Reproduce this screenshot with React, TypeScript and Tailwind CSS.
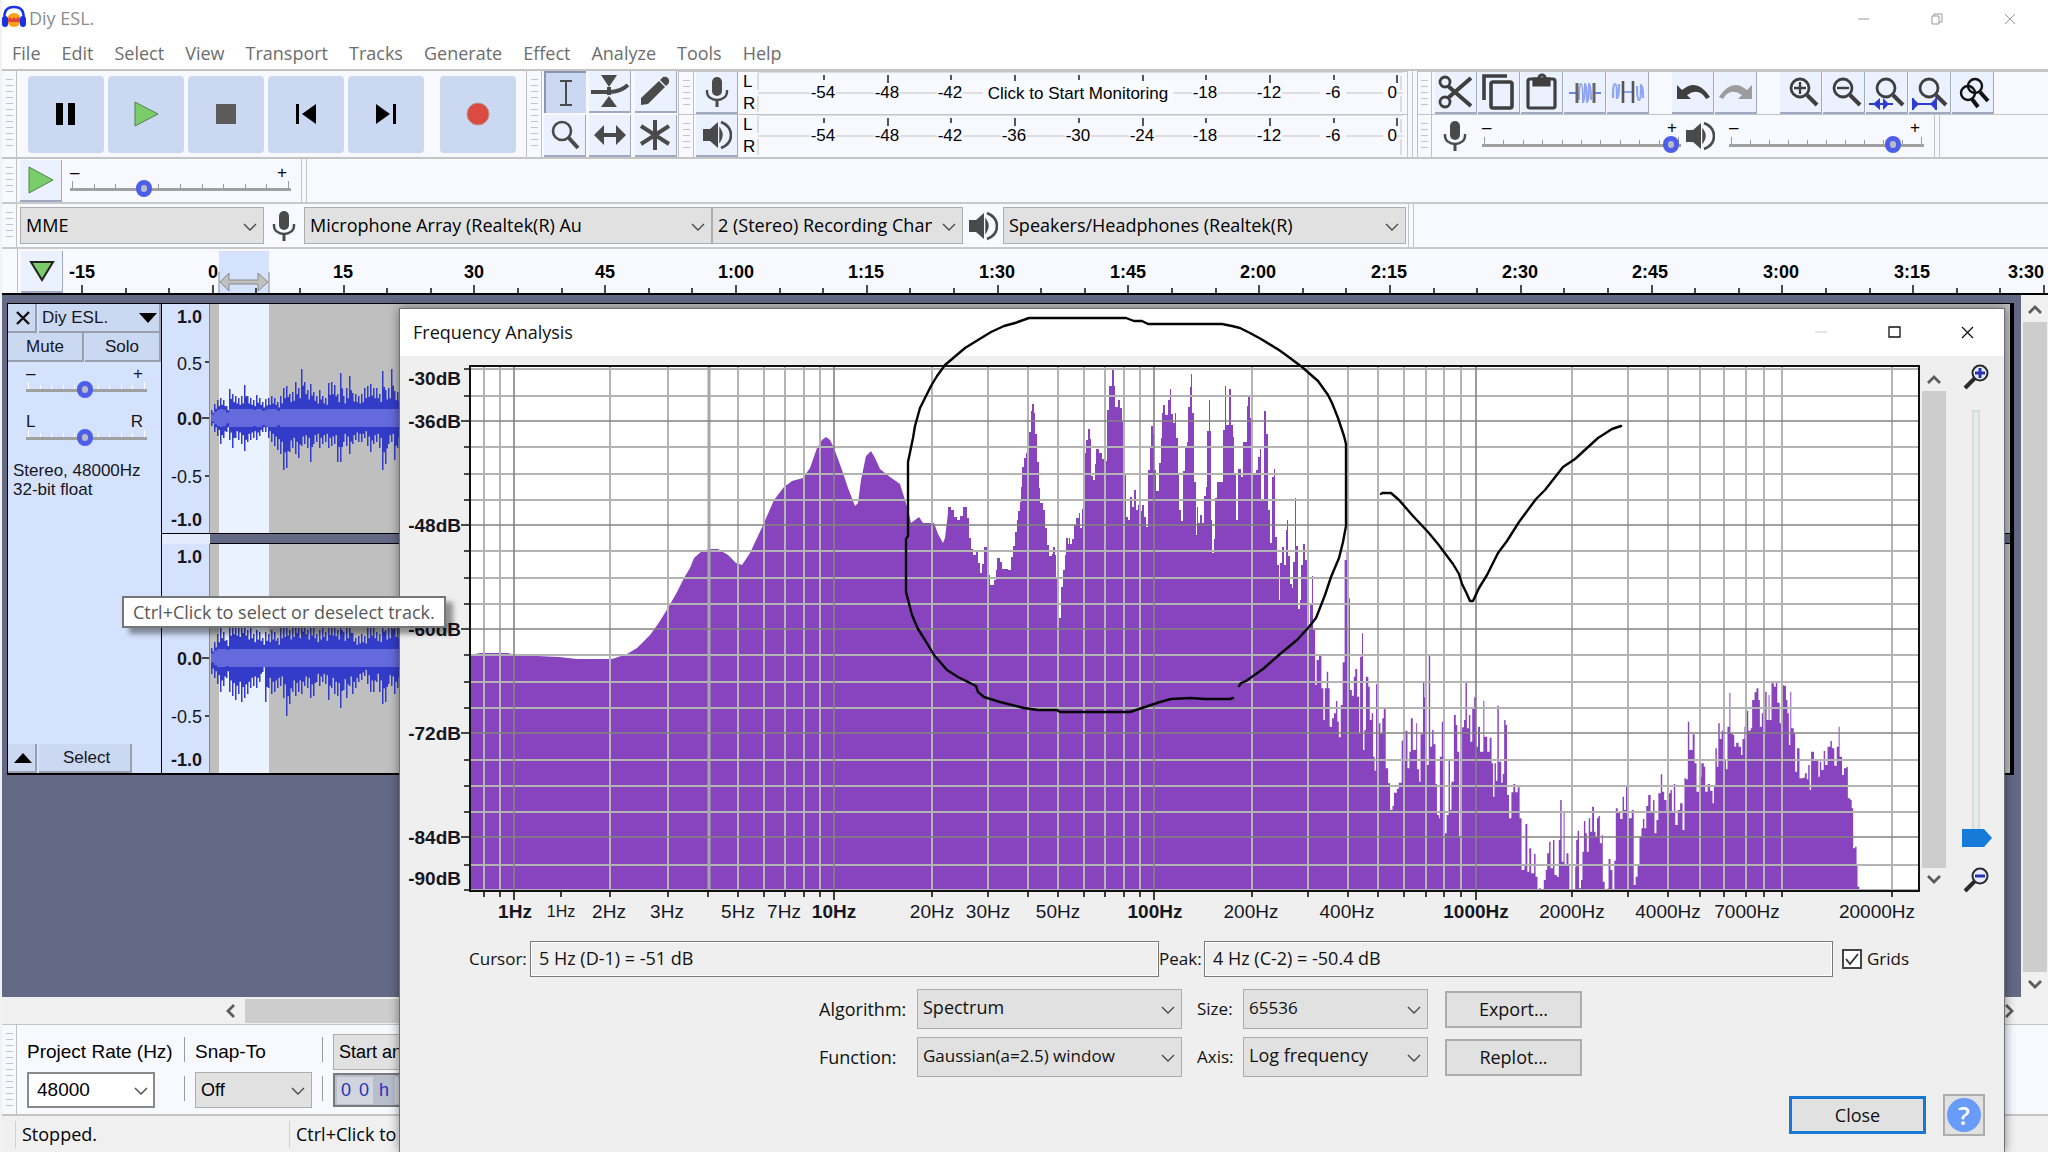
import type { ReactElement, ReactNode } from 'react';

const SANS = "font-['Open_Sans','Noto_Sans',sans-serif]";
const ARIAL = "font-['Liberation_Sans',Arial,sans-serif]";

const menu = ['File', 'Edit', 'Select', 'View', 'Transport', 'Tracks', 'Generate', 'Effect', 'Analyze', 'Tools', 'Help'];

const timeLabels = ['-15', '0', '15', '30', '45', '1:00', '1:15', '1:30', '1:45', '2:00', '2:15', '2:30', '2:45', '3:00', '3:15'];

const meterLabels = ['-54', '-48', '-42', '-36', '-30', '-24', '-18', '-12', '-6', '0'];

/* ---------- spectrum data ---------- */

const lowBand =
  '470,655 480,653 508,653 515,655 559,657 577,659 612,659 627,654 637,648 650,635 658,624 668,608 677,592 684,578 690,568 694,558 702,551 710,549 718,549 728,555 736,563 742,565 750,553 757,538 764,523 774,500 784,487 792,481 803,478 810,468 817,448 822,440 826,437 830,440 834,448 842,470 848,488 855,506 858,503 861,480 866,456 871,451 875,458 880,469 890,477 900,484 905,500 908,510 911,523 919,517 923,523 934,523 938,534 943,543 945,538 948,513';

const midBand: number[][] = [
  [948, 507], [951, 510], [954, 517], [957, 520], [960, 516], [963, 507], [967, 518], [969, 538], [971, 549], [973, 555], [976, 552], [978, 563], [980, 573],
  [982, 564], [984, 547], [987, 575], [990, 585], [994, 580], [996, 570], [997, 558], [1000, 562], [1002, 569], [1008, 570], [1011, 557], [1013, 546], [1015, 532],
  [1017, 520], [1018, 511], [1020, 502], [1021, 487], [1022, 467], [1024, 458], [1026, 453], [1028, 432], [1031, 411], [1032, 404], [1034, 413], [1035, 434],
  [1037, 462], [1039, 488], [1040, 503], [1043, 510], [1045, 528], [1047, 545], [1049, 556], [1052, 554], [1053, 547], [1055, 555], [1056, 578], [1059, 618],
  [1061, 587], [1063, 570], [1065, 555], [1066, 538], [1068, 544], [1069, 538], [1070, 544], [1072, 539], [1074, 525], [1076, 518], [1079, 513], [1080, 528],
  [1082, 509], [1084, 453], [1086, 440], [1088, 429], [1090, 439], [1091, 476], [1093, 480], [1095, 464], [1096, 449], [1099, 453], [1102, 459], [1105, 461],
  [1107, 410], [1109, 386], [1112, 369], [1114, 386], [1115, 407], [1118, 400], [1120, 408], [1122, 422], [1124, 475], [1126, 517], [1128, 520], [1130, 497],
  [1132, 507], [1134, 490], [1136, 510], [1138, 505], [1141, 511], [1142, 505], [1144, 517], [1146, 527], [1148, 470], [1150, 448], [1151, 426], [1153, 434],
  [1154, 470], [1156, 491], [1159, 463], [1161, 438], [1162, 413], [1163, 405], [1165, 415], [1168, 400], [1170, 389], [1171, 414], [1173, 423], [1175, 413],
  [1176, 438], [1178, 475], [1179, 510], [1181, 521], [1183, 471], [1185, 447], [1187, 442], [1188, 407], [1190, 387], [1191, 374], [1192, 413], [1194, 482],
  [1196, 535], [1197, 507], [1198, 523], [1200, 515], [1202, 523], [1204, 496], [1206, 487], [1207, 431], [1209, 400], [1210, 431], [1211, 520], [1212, 553],
  [1214, 539], [1215, 498], [1217, 482], [1221, 482], [1223, 430], [1225, 386], [1226, 425], [1229, 389], [1231, 425], [1233, 437], [1234, 475], [1236, 520],
  [1238, 469], [1241, 477], [1243, 442], [1247, 406], [1248, 397], [1250, 418], [1252, 474], [1256, 470], [1258, 457], [1260, 449], [1261, 499], [1264, 411],
  [1266, 434], [1268, 510], [1270, 543], [1272, 477], [1274, 469], [1275, 537], [1277, 565], [1279, 600], [1280, 563], [1282, 547], [1284, 565], [1286, 530],
  [1287, 520], [1288, 556], [1290, 584], [1292, 588], [1293, 562], [1295, 498], [1296, 546], [1298, 609], [1300, 600], [1301, 565], [1303, 544], [1305, 560],
  [1307, 570], [1308, 629], [1310, 604], [1312, 576],
];

// x is in 1/2.0686 px from 1290, y in 1/3 px from 500
const highBand: number[][] = [
  [47, 390], [52, 555], [55, 480], [60, 468], [65, 565], [69, 660], [72, 565], [76, 515], [79, 565], [82, 680], [87, 655], [91, 640], [95, 603], [98, 665],
  [101, 712], [105, 615], [109, 487], [113, 180], [117, 155], [119, 295], [124, 570], [128, 587], [132, 530], [135, 507], [139, 590], [143, 700], [145, 470],
  [149, 400], [151, 750], [154, 690], [157, 530], [162, 560], [165, 660], [169, 640], [172, 770], [175, 812], [178, 553], [182, 670], [187, 700], [191, 655],
  [194, 625], [198, 805], [203, 850], [207, 930], [212, 918], [215, 878], [221, 866], [225, 848], [231, 722], [235, 780], [239, 692], [243, 805], [247, 755],
  [250, 655], [254, 750], [261, 670], [263, 808], [267, 845], [270, 703], [275, 548], [278, 592], [282, 795], [287, 468], [290, 740], [294, 690], [297, 733],
  [301, 852], [304, 945], [308, 955], [310, 770], [314, 665], [317, 860], [320, 1000], [324, 945], [328, 783], [331, 930], [334, 845], [339, 645], [343, 675],
  [346, 755], [350, 1010], [354, 858], [356, 682], [360, 660], [363, 548], [366, 685], [370, 645], [373, 725], [377, 625], [381, 592], [385, 740], [389, 680],
  [393, 755], [400, 602], [402, 710], [408, 755], [413, 713], [417, 790], [420, 890], [423, 790], [426, 843], [429, 617], [432, 785], [437, 848], [440, 822],
  [443, 660], [446, 675], [449, 885], [453, 955], [458, 877], [462, 852], [466, 877], [471, 862], [475, 955], [479, 1110], [485, 1098], [487, 972], [491, 1115],
  [495, 1045], [499, 1120], [505, 1062], [508, 1130], [512, 1170], [515, 1165], [519, 1170], [525, 1140], [529, 1110], [532, 1060], [536, 1025], [539, 1105],
  [544, 1020], [547, 1125], [552, 1130], [556, 1020], [559, 900], [562, 1085], [566, 937], [568, 1092], [572, 1060], [576, 1092], [578, 1170], [588, 1170],
  [590, 1100], [592, 1020], [595, 992], [598, 1165], [602, 1140], [605, 1055], [608, 963], [611, 1000], [614, 1055], [618, 955], [621, 995], [625, 920],
  [629, 995], [632, 1010], [635, 955], [638, 948], [641, 1030], [645, 1005], [647, 1145], [651, 1170], [657, 1165], [659, 1077], [663, 1110], [667, 1170],
  [671, 1082], [674, 925], [678, 935], [683, 957], [688, 890], [691, 930], [695, 860], [698, 935], [701, 955], [707, 930], [711, 1155], [715, 1130], [719, 1095],
  [723, 1010], [727, 985], [730, 957], [733, 985], [737, 918], [741, 885], [746, 935], [751, 900], [754, 1000], [758, 960], [762, 880], [767, 823], [770, 875],
  [774, 900], [779, 935], [783, 880], [787, 870], [790, 935], [794, 852], [797, 975], [802, 930], [807, 910], [812, 990], [816, 835], [819, 838], [823, 665],
  [826, 750], [833, 703], [837, 790], [841, 875], [846, 830], [851, 790], [856, 800], [859, 875], [864, 852], [869, 872], [874, 910], [877, 860], [880, 745],
  [883, 800], [886, 670], [889, 717], [893, 692], [897, 780], [902, 808], [905, 680], [909, 578], [911, 700], [916, 705], [919, 740], [923, 728], [928, 740],
  [933, 765], [936, 717], [940, 680], [945, 632], [948, 692], [953, 685], [956, 600], [961, 577], [965, 565], [969, 600], [972, 680], [976, 640], [980, 700],
  [983, 575], [986, 660], [990, 585], [992, 660], [996, 550], [1001, 560], [1005, 548], [1008, 608], [1013, 670], [1018, 556], [1023, 558], [1026, 600],
  [1029, 640], [1032, 735], [1035, 575], [1037, 685], [1042, 700], [1045, 815], [1049, 745], [1054, 835], [1061, 833], [1065, 820], [1069, 838], [1072, 795],
  [1075, 870], [1078, 755], [1084, 780], [1089, 780], [1093, 830], [1096, 785], [1099, 810], [1104, 753], [1107, 795], [1112, 740], [1118, 723], [1121, 745],
  [1126, 797], [1131, 740], [1135, 680], [1137, 770], [1142, 825], [1146, 805], [1151, 800], [1154, 895], [1159, 900], [1162, 925], [1165, 1045], [1169, 1040],
  [1172, 1095], [1174, 1160], [1178, 1170],
];

const steps = (points: number[][]) => points.map(([x, y]) => `H${x}V${y}`).join('');

const gridX = [484, 500, 610, 668, 738, 764, 785, 804, 820, 932, 988, 1028, 1058, 1084, 1105, 1124, 1140, 1252, 1308, 1348, 1378, 1404, 1426, 1444, 1461, 1572, 1628, 1668, 1700, 1724, 1746, 1764, 1782, 1892];
const decadeX = [514, 834, 1154, 1476];
const gridY = [369, 396, 447, 474, 500, 551, 578, 604, 655, 682, 708, 760, 786, 812, 865, 890];
const majorY = [421, 525, 629, 733, 837];

const dbLabels: [string, number][] = [
  ['-30dB', 378], ['-36dB', 421], ['-48dB', 525], ['-60dB', 629], ['-72dB', 733], ['-84dB', 837], ['-90dB', 878],
];

const hzLabels: [string, number, boolean][] = [
  ['1Hz', 515, true], ['2Hz', 609, false], ['3Hz', 667, false], ['5Hz', 738, false], ['7Hz', 784, false], ['10Hz', 834, true],
  ['20Hz', 932, false], ['30Hz', 988, false], ['50Hz', 1058, false], ['100Hz', 1155, true], ['200Hz', 1251, false], ['400Hz', 1347, false],
  ['1000Hz', 1476, true], ['2000Hz', 1572, false], ['4000Hz', 1668, false], ['7000Hz', 1747, false], ['20000Hz', 1877, false],
];

/* ---------- waveform data ---------- */

const leftTop = [8, 14, 18, 20, 18, 12, 29, 24, 22, 20, 22, 33, 22, 20, 18, 23, 20, 16, 19, 20, 22, 20, 16, 22, 30, 32, 24, 26, 36, 30, 49, 36, 28, 34, 26, 22, 28, 22, 20, 35, 36, 33, 24, 45, 22, 30, 42, 25, 24, 22, 24, 30, 32, 34, 30, 30, 24, 47, 28, 30, 49, 27, 26];
const leftBottom = [8, 14, 18, 26, 20, 14, 22, 30, 20, 22, 26, 33, 24, 22, 20, 22, 18, 14, 14, 20, 24, 28, 32, 36, 52, 50, 34, 30, 36, 40, 28, 26, 30, 44, 26, 24, 30, 26, 24, 30, 28, 26, 44, 44, 24, 28, 36, 26, 22, 24, 24, 20, 28, 34, 26, 24, 30, 52, 46, 26, 24, 42, 30];
const rightTop = [10, 16, 24, 30, 26, 18, 34, 36, 34, 32, 38, 34, 28, 30, 24, 28, 26, 20, 26, 24, 28, 26, 20, 30, 32, 34, 28, 32, 38, 30, 40, 36, 28, 34, 30, 24, 28, 32, 26, 35, 34, 33, 28, 42, 26, 30, 38, 25, 20, 22, 24, 22, 30, 34, 30, 26, 24, 40, 28, 30, 44, 32, 30];
const rightBottom = [16, 20, 26, 34, 28, 20, 34, 38, 42, 36, 44, 40, 36, 30, 28, 30, 24, 14, 44, 30, 36, 34, 30, 28, 40, 58, 46, 34, 38, 34, 36, 28, 30, 40, 38, 24, 28, 24, 26, 42, 30, 36, 38, 50, 32, 40, 28, 36, 30, 24, 22, 18, 26, 34, 34, 24, 34, 46, 44, 26, 28, 36, 30];

/* ---------- small parts ---------- */

function Grabber({ className = '' }: { className?: string }): ReactElement {
  return (
    <div className={`flex w-[15px] shrink-0 justify-center border-r border-[#c0c0c0] py-2 ${className}`}>
      <div className="w-[7px] bg-[repeating-linear-gradient(to_bottom,#c4c4c4_0px,#c4c4c4_1px,transparent_1px,transparent_6px)]" />
    </div>
  );
}

function DoubleLine(): ReactElement {
  return <div className="w-[6px] shrink-0 self-stretch border-x border-[#c4c4c4]" />;
}

type ToolProps = { label: string; pressed?: boolean; className?: string; children: ReactNode };

function Tool({ label, pressed = false, className = '', children }: ToolProps): ReactElement {
  return (
    <button
      type="button"
      aria-label={label}
      className={`flex h-[42px] w-[42px] shrink-0 items-center justify-center ${
        pressed ? 'border-l-2 border-t-2 border-[#8b95ad] bg-[#cbd8f1]' : 'border-b-2 border-r border-[#a0a9c2] bg-[#ebf1fe]'
      } ${className}`}
    >
      {children}
    </button>
  );
}

function Chevron(): ReactElement {
  return (
    <svg viewBox="0 0 14 8" className="pointer-events-none absolute right-[7px] top-1/2 -mt-[3px] h-[8px] w-[14px]">
      <path d="M1 1 L7 7 L13 1" fill="none" stroke="#4a4a4a" strokeWidth="1.4" />
    </svg>
  );
}

type PickProps = { id: string; label?: string; value: string; wrap: string; className?: string };

function Pick({ id, label, value, wrap, className = 'text-[18px]' }: PickProps): ReactElement {
  return (
    <div className={`relative ${wrap}`}>
      <select id={id} aria-label={label} className={`h-full w-full appearance-none border border-[#adadad] bg-[#e1e1e1] pl-[5px] pr-[30px] ${className}`}>
        <option>{value}</option>
      </select>
      <Chevron />
    </div>
  );
}

type RangeProps = { label: string; value: number; wrap: string; minus?: string; plus?: string; light?: boolean };

function Range({ label, value, wrap, minus = '–', plus = '+', light = false }: RangeProps): ReactElement {
  const ticks = Array.from({ length: 11 }, (_, i) => i);
  return (
    <div className={`flex flex-col ${wrap}`}>
      <div className={`flex h-[16px] items-center justify-between pr-[4px] text-[17px] leading-none ${ARIAL}`}>
        <span>{minus}</span>
        <span>{plus}</span>
      </div>
      <div className="relative h-[17px]">
        <div className="absolute inset-x-0 top-px flex h-[8px] items-end justify-between px-[2px]">
          {ticks.map((i) => (
            <span key={i} className={`w-px ${i % 10 === 0 ? 'h-[8px]' : 'h-[5px]'} ${light ? 'bg-white' : 'bg-[#9a9a9a]'}`} />
          ))}
        </div>
        <div className="absolute inset-x-0 top-[8px] h-[3px] bg-[#a0a0a0]" />
        <input
          type="range"
          aria-label={label}
          defaultValue={value}
          className="absolute inset-0 m-0 h-[17px] w-full appearance-none bg-transparent [&::-webkit-slider-thumb]:h-[17px] [&::-webkit-slider-thumb]:w-[16px] [&::-webkit-slider-thumb]:appearance-none [&::-webkit-slider-thumb]:rounded-full [&::-webkit-slider-thumb]:border-[5px] [&::-webkit-slider-thumb]:border-[#4d5fe8] [&::-webkit-slider-thumb]:bg-[#b9bcc9]"
        />
      </div>
    </div>
  );
}

function Mic(): ReactElement {
  return (
    <svg width="24" height="32" viewBox="0 0 24 32" className="shrink-0">
      <rect x="7" y="1" width="10" height="19" rx="5" fill="#4a4a4a" />
      <path d="M2 14 v2 a10 8 0 0 0 20 0 v-2" fill="none" stroke="#4a4a4a" strokeWidth="2.4" />
      <path d="M12 24 V31" stroke="#4a4a4a" strokeWidth="3" />
    </svg>
  );
}

function Speaker(): ReactElement {
  return (
    <svg width="30" height="30" viewBox="0 0 30 30" className="shrink-0">
      <path d="M1 9 H8 L16 2 V28 L8 21 H1 Z" fill="#4a4a4a" />
      <path d="M18 9 Q22 15 18 21 Z" fill="#4a4a4a" stroke="#4a4a4a" strokeWidth="1.5" />
      <path d="M19 2 Q29 6 29 15 Q29 24 19 28" fill="none" stroke="#4a4a4a" strokeWidth="2.6" />
    </svg>
  );
}

function Magnifier({ children }: { children?: ReactNode }): ReactElement {
  return (
    <svg width="38" height="36" viewBox="0 0 38 36">
      <circle cx="18" cy="14" r="9" fill="none" stroke="#3f3f3f" strokeWidth="2.8" />
      <path d="M25 21 L35 31" stroke="#3f3f3f" strokeWidth="4" />
      {children}
    </svg>
  );
}

function Arrow({ dir, className = '' }: { dir: 'up' | 'down' | 'left' | 'right'; className?: string }): ReactElement {
  const d = { up: 'M1 10 L7 4 L13 10', down: 'M1 4 L7 10 L13 4', left: 'M10 1 L4 7 L10 13', right: 'M4 1 L10 7 L4 13' }[dir];
  return (
    <svg width="14" height="14" viewBox="0 0 14 14" className={`shrink-0 ${className}`}>
      <path d={d} fill="none" stroke="#5c5c5c" strokeWidth="2.8" />
    </svg>
  );
}

/* ---------- top toolbars ---------- */

function TitleBar(): ReactElement {
  return (
    <header className="flex h-[37px] shrink-0 items-center bg-white">
      <svg width="26" height="24" viewBox="0 0 26 24" className="-mt-1 shrink-0">
        <circle cx="12" cy="15" r="7" fill="#f9a11b" />
        <path d="M6 14 L8 12 L10 14 L12 12 L14 14 L16 12 L18 14 V17 H6 Z" fill="#e0433a" />
        <path d="M3 17 Q0 2 12 2 Q24 2 21 17" fill="none" stroke="#1a32e0" strokeWidth="2.6" />
        <rect x="0" y="11" width="6" height="11" rx="3" fill="#1a32e0" />
        <rect x="18" y="11" width="6" height="11" rx="3" fill="#1a32e0" />
      </svg>
      <span className="pl-px text-[18px] text-[#8c8c8c]">Diy ESL.</span>
      <div className="ml-auto flex gap-[61px] pr-[32px]">
        <button type="button" aria-label="Minimize">
          <svg width="12" height="12" viewBox="0 0 12 12"><path d="M0 6 H11" stroke="#999" /></svg>
        </button>
        <button type="button" aria-label="Restore">
          <svg width="12" height="12" viewBox="0 0 12 12" fill="none" stroke="#999"><path d="M1 3 H8 V11 H1 Z M3 3 V1 H11 V9 H8" /></svg>
        </button>
        <button type="button" aria-label="Close window">
          <svg width="12" height="12" viewBox="0 0 12 12"><path d="M1 1 L11 11 M11 1 L1 11" stroke="#999" /></svg>
        </button>
      </div>
    </header>
  );
}

function Transport(): ReactElement {
  const cls = 'flex h-[77px] w-[76px] items-center justify-center rounded bg-[#cbd8f1]';
  return (
    <div className="flex w-[510px] shrink-0 items-center gap-[4px] border-r border-[#c0c0c0] pl-[11px]">
      <button type="button" aria-label="Pause" className={cls}>
        <svg width="24" height="24"><path d="M2 1 h7 v22 h-7 Z M14 1 h7 v22 h-7 Z" /></svg>
      </button>
      <button type="button" aria-label="Play" className={cls}>
        <svg width="26" height="26"><path d="M2 1 L25 13 L2 25 Z" fill="#7bcd6b" stroke="#4f8347" /></svg>
      </button>
      <button type="button" aria-label="Stop" className={cls}>
        <svg width="20" height="20"><rect width="20" height="20" fill="#5b5b5b" /></svg>
      </button>
      <button type="button" aria-label="Skip to start" className={cls}>
        <svg width="22" height="22"><path d="M1 1 h3 v20 h-3 Z M21 1 V21 L7 11 Z" /></svg>
      </button>
      <button type="button" aria-label="Skip to end" className={cls}>
        <svg width="22" height="22"><path d="M18 1 h3 v20 h-3 Z M1 1 V21 L15 11 Z" /></svg>
      </button>
      <button type="button" aria-label="Record" className={`${cls} ml-[12px]`}>
        <svg width="24" height="24"><circle cx="12" cy="12" r="11" fill="#dc4a41" stroke="#b59a86" /></svg>
      </button>
    </div>
  );
}

function Tools(): ReactElement {
  return (
    <div className="grid w-[137px] shrink-0 grid-cols-3 content-between gap-x-[2px] border-r border-[#c0c0c0] pl-[2px]">
      <Tool label="Selection" pressed>
        <svg width="16" height="28" fill="none" stroke="#4a4a4a" strokeWidth="2"><path d="M2 2 H14 M8 2 V26 M2 26 H14" /></svg>
      </Tool>
      <Tool label="Envelope">
        <svg width="40" height="34" fill="#4a4a4a">
          <path d="M11 1 H27 L19 13 Z M19 22 L27 33 H11 Z M17 13 h4 v8 h-4 Z" />
          <path d="M1 18 H20 Q30 18 38 11" fill="none" stroke="#4a4a4a" strokeWidth="4" />
        </svg>
      </Tool>
      <Tool label="Draw">
        <svg width="30" height="30" fill="#4a4a4a"><path d="M1 29 V22 L19 5 L25 11 L8 28 Z M20 4 L23 1 Q26 0 28 2 Q30 4 29 7 L26 10 Z" /></svg>
      </Tool>
      <Tool label="Zoom">
        <svg width="30" height="30" fill="none" stroke="#4a4a4a"><circle cx="12" cy="11" r="9" strokeWidth="2.6" /><path d="M18 17 L28 28" strokeWidth="4" /></svg>
      </Tool>
      <Tool label="Time shift">
        <svg width="34" height="22" fill="#4a4a4a"><path d="M1 11 L11 1 V9 H23 V1 L33 11 L23 21 V13 H11 V21 Z" /></svg>
      </Tool>
      <Tool label="Multi-tool">
        <svg width="32" height="32" stroke="#4a4a4a" strokeWidth="4"><path d="M16 1 V31 M2 7 L30 25 M30 7 L2 25" /></svg>
      </Tool>
    </div>
  );
}

function Meter({ label, icon, overlay }: { label: string; icon: ReactNode; overlay?: string }): ReactElement {
  return (
    <div className="flex h-[43px] w-[728px] border-t border-[#c4c4c4]">
      <Grabber />
      <Tool label={label} className="ml-[2px]">{icon}</Tool>
      <svg className={`min-w-0 flex-1 text-[17px] ${ARIAL}`} height="42">
        <path d="M20 0 H665 M20 1 V18 M20 24 V40 M20 21 H665 M663 4 V18 M663 24 V40" stroke="#c4c4c4" fill="none" />
        <text x="5" y="15">L</text>
        <text x="5" y="37">R</text>
        {meterLabels.map((t, i) => {
          const x = 86 + Math.round(i * 63.7);
          const covered = overlay && i > 2 && i < 6;
          return (
            <g key={t}>
              <path d={`M${x} 3 v${i % 2 ? 8 : 5}`} stroke="#111" strokeWidth="1.4" />
              {!covered && <rect x={x - 14} y="14" width={t === '0' ? 12 : 26} height="14" fill="#f8f9ff" />}
              {!covered && <text x={t === '0' ? x : x - 1} y="26" textAnchor={t === '0' ? 'end' : 'middle'}>{t}</text>}
            </g>
          );
        })}
        {overlay && (
          <g>
            <rect x="245" y="9" width="190" height="24" fill="#fafbff" />
            <text x="340" y="27" textAnchor="middle">{overlay}</text>
          </g>
        )}
      </svg>
    </div>
  );
}

function EditBar(): ReactElement {
  return (
    <div className="flex h-[43px] border-t border-[#c4c4c4]">
      <Grabber className="border-l" />
      <div className="flex pl-[3px]">
        <div className="flex gap-px">
          <Tool label="Cut">
            <svg width="36" height="34" fill="none" stroke="#3f3f3f">
              <circle cx="7" cy="7" r="5" strokeWidth="2.8" /><circle cx="7" cy="27" r="5" strokeWidth="2.8" />
              <path d="M10 11 L33 31 M10 23 L33 3" strokeWidth="4" />
            </svg>
          </Tool>
          <Tool label="Copy">
            <svg width="36" height="38" fill="none" stroke="#3f3f3f" strokeWidth="3.6"><path d="M3 27 V3 H26" /><rect x="10" y="9" width="21" height="26" rx="2" /></svg>
          </Tool>
          <Tool label="Paste">
            <svg width="34" height="38" fill="none" stroke="#3f3f3f" strokeWidth="3.2"><rect x="3" y="6" width="27" height="29" rx="2" /><path d="M9 6 h15 v6 h-15 Z" fill="#3f3f3f" /><circle cx="17" cy="5" r="3" /></svg>
          </Tool>
          <Tool label="Trim">
            <svg width="34" height="26" fill="none" className="mt-[2px]">
              <path d="M1 13 H8 M26 13 H33" stroke="#6c85ea" strokeWidth="2" />
              <path d="M11 20 Q11 4 13 4 Q15 4 15 22 Q17 22 17 4 Q19 4 19 22 Q21 22 21 4 Q23 4 23 20" stroke="#8fa5f3" strokeWidth="2" />
              <path d="M9 3 V23 M26 3 V23" stroke="#666" strokeWidth="3" />
            </svg>
          </Tool>
          <Tool label="Silence">
            <svg width="36" height="28" fill="none">
              <path d="M3 20 Q3 6 5 6 Q7 6 7 20 Q9 20 9 6 M27 8 Q27 22 29 22 Q31 22 31 7 Q33 7 33 20 M12 14 H24" stroke="#8fa5f3" strokeWidth="2.2" />
              <path d="M13 3 V25 M23 3 V25" stroke="#555" strokeWidth="2.6" />
            </svg>
          </Tool>
        </div>
        <div className="flex gap-px pl-[23px]">
          <Tool label="Undo">
            <svg width="36" height="18"><path d="M2 2 V16 H16 L12 12 Q24 4 31 16 L35 14 Q22 -6 7 7 Z" fill="#3f3f3f" /></svg>
          </Tool>
          <Tool label="Redo">
            <svg width="36" height="18"><path d="M34 2 V16 H20 L24 12 Q12 4 5 16 L1 14 Q14 -6 29 7 Z" fill="#9c9c9c" /></svg>
          </Tool>
        </div>
        <div className="flex gap-px pl-[23px]">
          <Tool label="Zoom in"><Magnifier><path d="M12 14 H24 M18 8 V20" stroke="#3f3f3f" strokeWidth="2.4" /></Magnifier></Tool>
          <Tool label="Zoom out"><Magnifier><path d="M12 14 H24" stroke="#3f3f3f" strokeWidth="2.4" /></Magnifier></Tool>
          <Tool label="Fit selection"><Magnifier><path d="M1 30 H25" stroke="#2e3cd0" strokeWidth="2" /><path d="M5 30 L12 24 V36 Z M21 30 L15 24 V36 Z" fill="#2e3cd0" /></Magnifier></Tool>
          <Tool label="Fit project"><Magnifier><path d="M2 24 V36 M2 30 H24 M25 24 V36" stroke="#2e3cd0" strokeWidth="2" /><path d="M2 24 L8 30 L2 36 Z M25 24 L19 30 L25 36 Z" fill="#2e3cd0" /></Magnifier></Tool>
          <Tool label="Zoom toggle">
            <svg width="36" height="34" fill="none" stroke="#111">
              <circle cx="20" cy="11" r="7" strokeWidth="2.4" /><circle cx="13" cy="18" r="7" strokeWidth="2.4" />
              <path d="M17 24 L23 32 M25 17 L33 26" strokeWidth="4" />
            </svg>
          </Tool>
        </div>
      </div>
    </div>
  );
}

function MixerBar(): ReactElement {
  return (
    <div className="flex h-[43px] items-center border-t border-[#c4c4c4]">
      <Grabber className="self-stretch border-l" />
      <div className="flex items-center pl-[11px]">
        <Mic />
        <Range label="Recording volume" value={99} wrap="ml-[15px] w-[199px]" />
        <div className="pl-[4px]"><Speaker /></div>
        <Range label="Playback volume" value={87} wrap="ml-[14px] w-[195px]" />
      </div>
      <div className="w-[10px]" />
      <DoubleLine />
    </div>
  );
}

function Toolbars(): ReactElement {
  return (
    <div className="shrink-0 bg-[#f8f9ff]">
      <div className="flex h-[90px] border-y-2 border-[#c4c4c4]">
        <Grabber />
        <Transport />
        <Grabber />
        <Tools />
        <div className="flex flex-col">
          <Meter label="Record meter" icon={<Mic />} overlay="Click to Start Monitoring" />
          <Meter label="Playback meter" icon={<Speaker />} />
        </div>
        <DoubleLine />
        <div className="flex min-w-0 flex-1 flex-col pl-[4px]">
          <EditBar />
          <MixerBar />
        </div>
      </div>
      <div className="flex h-[45px] items-center border-b-2 border-[#c9c9c9]">
        <Grabber className="self-stretch" />
        <Tool label="Play at speed" className="ml-[3px]">
          <svg width="26" height="28"><path d="M1 1 L25 14 L1 27 Z" fill="#7bcd6b" stroke="#4f8347" /></svg>
        </Tool>
        <Range label="Playback speed" value={32} wrap="ml-[8px] w-[221px]" />
        <div className="w-[10px]" />
        <DoubleLine />
      </div>
      <div className="flex h-[45px] items-center border-b-2 border-[#c9c9c9]">
        <Grabber className="self-stretch" />
        <Pick id="host" label="Audio host" value="MME" wrap="ml-[3px] h-[37px] w-[244px]" />
        <div className="flex w-[40px] justify-center"><Mic /></div>
        <Pick id="rec-device" label="Recording device" value="Microphone Array (Realtek(R) Au" wrap="h-[37px] w-[408px]" />
        <Pick id="rec-channels" label="Recording channels" value="2 (Stereo) Recording Channels" wrap="h-[37px] w-[251px]" />
        <div className="flex w-[40px] justify-center"><Speaker /></div>
        <Pick id="play-device" label="Playback device" value="Speakers/Headphones (Realtek(R)" wrap="h-[37px] w-[403px]" />
        <div className="w-[2px]" />
        <DoubleLine />
      </div>
      <div className="flex h-[46px] border-b-2 border-black">
        <div className="w-[16px] shrink-0 border-r border-[#c0c0c0]" />
        <Tool label="Pinned play head" className="ml-[3px] mt-[2px]">
          <svg width="26" height="22"><path d="M2 2 H24 L13 20 Z" fill="#7bcd6b" stroke="#222" strokeWidth="2" /></svg>
        </Tool>
        <svg className={`h-[44px] min-w-0 flex-1 text-[18px] font-bold ${ARIAL}`}>
          <rect x="156" y="2" width="50" height="42" fill="#d5e2fe" />
          {Array.from({ length: 46 }, (_, i) => (
            <path key={i} d={`M${19 + Math.round(i * 43.6)} ${i % 3 ? 39 : 36} V44`} stroke="#111" strokeWidth="1.5" />
          ))}
          {timeLabels.map((t, i) => (
            <text key={t} x={19 + Math.round(i * 130.7)} y="29" textAnchor="middle">{t}</text>
          ))}
          <text x="1981" y="29" textAnchor="end">3:30</text>
          <path d="M156 23 V44 M206 23 V44" stroke="#8a8a8a" />
          <path d="M157 33 L166 24 V31 H195 V24 L205 33 L195 42 V35 H166 V42 Z" fill="#c0c0c0" stroke="#8a8a8a" />
        </svg>
      </div>
    </div>
  );
}

/* ---------- track area ---------- */

function Channel({ top, bottom, tag }: { top: number[]; bottom: number[]; tag: string }): ReactElement {
  const marks: [string, number, boolean][] = [['1.0', 19, true], ['0.5', 66, false], ['0.0', 121, true], ['-0.5', 179, false], ['-1.0', 222, true]];
  return (
    <div className="flex h-[229px]">
      <svg width="48" height="229" className={`shrink-0 bg-[#d5e2fe] text-[18px] ${ARIAL}`}>
        {marks.map(([t, y, bold]) => (
          <text key={t} x="40" y={y} textAnchor="end" fontWeight={bold ? 700 : 400} fill="#16161f">{t}</text>
        ))}
        <path d="M43 58 H48 M40 114 H48 M43 172 H48" stroke="#111" strokeWidth="1.5" />
        <path d="M47.5 0 V229" stroke="#8a8a8a" />
      </svg>
      <svg className="h-[229px] min-w-0 flex-1 bg-[#bfbfbf]" aria-label={tag}>
        <rect x="9" width="50" height="229" fill="#eaf1ff" />
        {top.map((a, i) => (
          <g key={i}>
            <rect x={i * 3 + 1} y={114 - a} width="1.5" height={a + bottom[i]} fill="#323cc8" />
            <rect x={i * 3 + 1} y={114 - a * 0.66} width="3" height={(a + bottom[i]) * 0.66} fill="#323cc8" />
            <rect x={i * 3 + 1} y={114 - Math.min(9, a * 0.45)} width="3" height={Math.min(18, a * 0.9)} fill="#6469dc" />
          </g>
        ))}
      </svg>
    </div>
  );
}

function TrackArea(): ReactElement {
  const flat = 'flex items-center border-b-2 border-r-2 border-[#9a9fae] bg-[#cbd8f1]';
  return (
    <main className="flex min-h-0 flex-1 bg-[#646986]">
      <div className="min-w-0 flex-1 pl-[5px] pr-[7px] pt-[8px]">
        <section className="flex h-[472px] border border-b-2 border-r-4 border-black bg-[#d5e2fe]">
          <div className={`flex w-[153px] shrink-0 flex-col text-[17px] text-[#16161f] ${ARIAL}`}>
            <div className="flex h-[29px] gap-[2px]">
              <button type="button" aria-label="Close track" className={`${flat} w-[29px] justify-center pl-[3px]`}>
                <svg width="14" height="14" stroke="#111" strokeWidth="2.4"><path d="M1 1 L13 13 M13 1 L1 13" /></svg>
              </button>
              <button type="button" className={`${flat} flex-1 justify-between pl-[3px] pr-[2px]`}>
                Diy ESL.
                <svg width="18" height="10"><path d="M0 0 H18 L9 10 Z" /></svg>
              </button>
            </div>
            <div className="flex h-[29px] gap-px">
              <button type="button" className={`${flat} flex-1 justify-center`}>Mute</button>
              <button type="button" className={`${flat} flex-1 justify-center`}>Solo</button>
            </div>
            <Range label="Gain" value={49} wrap="ml-[18px] mt-[3px] w-[121px]" light />
            <Range label="Pan" value={49} minus="L" plus="R" wrap="ml-[18px] mt-[15px] w-[121px]" light />
            <p className="pl-[5px] pt-[15px] leading-[19px]">
              Stereo, 48000Hz
              <br />
              32-bit float
            </p>
            <div className="mt-auto flex h-[29px] gap-[2px]">
              <button type="button" aria-label="Collapse track" className={`${flat} w-[29px] justify-center pl-[2px]`}>
                <svg width="18" height="10"><path d="M0 10 H18 L9 0 Z" /></svg>
              </button>
              <button type="button" className={`${flat} w-[93px] justify-center pl-[4px]`}>Select</button>
            </div>
          </div>
          <div className="flex min-w-0 flex-1 flex-col border-l border-black">
            <Channel top={leftTop} bottom={leftBottom} tag="Left channel" />
            <div className="flex h-[11px]">
              <div className="w-[48px] border-t border-black bg-[#e3ebfd]" />
              <div className="flex-1 border-y border-black bg-[#646986]" />
            </div>
            <Channel top={rightTop} bottom={rightBottom} tag="Right channel" />
          </div>
        </section>
      </div>
      <div className="flex w-[27px] shrink-0 flex-col items-center justify-between bg-[#f0f0f0] py-[6px]">
        <Arrow dir="up" className="mt-[2px]" />
        <div className="my-[5px] w-[24px] flex-1 bg-[#cdcdcd]" />
        <Arrow dir="down" />
      </div>
    </main>
  );
}

function Separators({ className }: { className: string }): ReactElement {
  return (
    <div className={`flex w-[11px] flex-col justify-center gap-[14px] pb-[2px] ${className}`}>
      <div className="h-[25px] w-px bg-[#9a9a9a]" />
      <div className="h-[25px] w-px bg-[#9a9a9a]" />
    </div>
  );
}

function BottomBar(): ReactElement {
  return (
    <footer className="shrink-0">
      <div className="flex h-[27px] items-center bg-[#f0f0f0] pl-[222px]">
        <Arrow dir="left" />
        <div className="ml-[7px] mr-[2px] h-[24px] flex-1 bg-[#cdcdcd]" />
        <Arrow dir="right" className="mr-[32px]" />
      </div>
      <div className={`flex h-[92px] border-b-2 border-t border-[#c4c4c4] bg-[#f8f9ff] text-[19px] ${ARIAL}`}>
        <Grabber />
        <div className="flex w-[158px] flex-col gap-[2px] pl-[10px] pt-[9px]">
          <label htmlFor="rate" className="flex h-[36px] items-center whitespace-nowrap">Project Rate (Hz)</label>
          <div className="relative h-[36px] w-[128px]">
            <input id="rate" defaultValue="48000" className="h-full w-full border-2 border-[#8a8a8a] bg-white pl-[8px]" />
            <Chevron />
          </div>
        </div>
        <Separators className="ml-[9px]" />
        <div className="flex flex-col gap-[2px] pt-[9px]">
          <label htmlFor="snap" className="flex h-[36px] items-center">Snap-To</label>
          <Pick id="snap" value="Off" wrap="h-[36px] w-[117px]" className={`text-[18px] ${ARIAL}`} />
        </div>
        <Separators className="ml-[10px]" />
        <div className="flex flex-col gap-[3px] pt-[9px]">
          <Pick id="range-mode" label="Selection mode" value="Start and End of Selection" wrap="h-[36px] w-[320px]" className={`text-[18px] ${ARIAL}`} />
          <div className="flex h-[34px] w-[320px] items-center gap-[6px] border-2 border-[#7a7a7a] bg-[#b7bdcb] pl-[2px] text-[18px] text-[#2a33b8]">
            <span className="flex gap-[8px] bg-[#d2d5de] px-[4px]"><span>0</span><span>0</span></span>
            <span>h</span>
            <span className="flex gap-[8px] bg-[#d2d5de] px-[4px]"><span>0</span><span>0</span></span>
          </div>
        </div>
      </div>
      <div className="flex h-[36px] items-center bg-[#f0f0f0] text-[18px]">
        <span className="ml-[13px] w-[274px] border-l border-[#d0d0d0] pl-[6px]">Stopped.</span>
        <span className="border-l border-[#d0d0d0] pl-[6px]">Ctrl+Click to select or deselect track.</span>
      </div>
    </footer>
  );
}

/* ---------- frequency analysis window ---------- */

function Spectrum(): ReactElement {
  return (
    <svg viewBox="400 356 1521 569" className={`block min-w-0 flex-1 self-start text-[19px] ${ARIAL}`}>
      <rect x="469" y="365" width="1451" height="527" fill="white" />
      <g fill="#8843bf">
        <polygon points={`470,891 ${lowBand} 948,891`} />
        <path d={`M948 891${steps(midBand)}H1313V891Z`} />
        <path d={`M46 1173${steps(highBand)}V1173Z`} transform="translate(1290 500) scale(0.4834 0.3333)" />
      </g>
      <g stroke="#b4b4b4" strokeWidth="2" fill="none">
        <path d={gridX.map((x) => `M${x} 366V891`).join('')} />
        <path d={gridY.map((y) => `M470 ${y}H1919`).join('')} />
        <path d="M709 366V891" stroke="#a8a8a8" strokeWidth="3" />
      </g>
      <path
        d={decadeX.map((x) => `M${x} 366V891`).join('') + majorY.map((y) => `M470 ${y}H1919`).join('')}
        stroke="#828282"
        strokeWidth="1.6"
      />
      <rect x="470" y="366" width="1449" height="525" fill="none" stroke="#111" strokeWidth="2" />
      <path d={gridY.map((y) => `M464 ${y}H470`).join('') + majorY.map((y) => `M461 ${y}H470`).join('')} stroke="#111" strokeWidth="1.6" />
      <path d={[...gridX, 561, 708].map((x) => `M${x} 891V897`).join('') + decadeX.map((x) => `M${x} 891V900`).join('')} stroke="#111" strokeWidth="1.6" />
      {dbLabels.map(([t, y]) => (
        <text key={t} x="461" y={y + 7} textAnchor="end" fontWeight="700" fill="#16161f">{t}</text>
      ))}
      {hzLabels.map(([t, x, bold]) => (
        <text key={t} x={x} y="918" textAnchor="middle" fontWeight={bold ? 700 : 400} fill="#16161f">{t}</text>
      ))}
      <text x="561" y="917" textAnchor="middle" fontSize="16" fill="#16161f">1Hz</text>
    </svg>
  );
}

function Lens({ plus = false }: { plus?: boolean }): ReactElement {
  return (
    <svg width="26" height="26" viewBox="0 0 26 26" className="shrink-0">
      <path d="M2 24 L12 14" stroke="#2a2a2a" strokeWidth="4" />
      <circle cx="17" cy="9" r="7.5" fill="#e9ecff" stroke="#2a2a2a" strokeWidth="2" />
      <path d={plus ? 'M12 9 H22 M17 4 V14' : 'M12 9 H22'} stroke="#2733b5" strokeWidth="3" />
    </svg>
  );
}

function FrequencyDialog(): ReactElement {
  const readout = 'h-[36px] min-w-0 flex-1 border border-[#7a7a7a] bg-[#efefef] pb-[2px] pl-[8px] outline outline-1 -outline-offset-2 outline-white';
  const button = 'h-[37px] w-[137px] border-2 border-[#adadad] bg-[#e1e1e1]';
  const pick = 'pb-[3px] text-[18px]';
  return (
    <div className="absolute bottom-0 left-[399px] right-[43px] top-[308px] flex flex-col border border-b-0 border-[#6f6f78] bg-[#efefef] text-[18px] text-[#111] shadow-[0_0_10px_rgba(0,0,0,0.45)]">
      <div className="flex h-[47px] shrink-0 items-center bg-white pl-[13px] pr-[30px]">
        <h1 className="text-[18px]">Frequency Analysis</h1>
        <div className="ml-auto flex gap-[60px]">
          <button type="button" aria-label="Minimize dialog"><svg width="13" height="13"><path d="M0 6 H12" stroke="#ccc" /></svg></button>
          <button type="button" aria-label="Maximize dialog"><svg width="13" height="13"><path d="M1 1 H12 V11 H1 Z" fill="none" stroke="#111" strokeWidth="1.3" /></svg></button>
          <button type="button" aria-label="Dismiss dialog"><svg width="13" height="13"><path d="M1 1 L12 12 M12 1 L1 12" stroke="#111" strokeWidth="1.3" /></svg></button>
        </div>
      </div>
      <div className="flex">
        <Spectrum />
        <div className="mb-[35px] mt-[13px] flex w-[26px] flex-col items-center justify-between py-[4px]">
          <Arrow dir="up" />
          <div className="my-[4px] w-[24px] flex-1 bg-[#cdcdcd]" />
          <Arrow dir="down" />
        </div>
        <div className="mb-[32px] mt-[8px] flex w-[57px] flex-col items-center pl-px">
          <Lens plus />
          <div className="relative flex flex-1 flex-col items-center pt-[20px]">
            <span className="w-[8px] flex-1 border-2 border-b-0 border-[#d8dbdc] bg-[#e8eaea]" />
            <svg width="30" height="18" className="ml-[2px]"><path d="M0 0 H22 L30 9 L22 18 H0 Z" fill="#167bd8" /></svg>
            <input type="range" aria-label="Zoom level" defaultValue={0} className="absolute inset-0 m-0 h-full w-full opacity-0 [direction:rtl] [writing-mode:vertical-lr]" />
          </div>
          <div className="pt-[20px]"><Lens /></div>
        </div>
      </div>
      <div className="mt-[16px] flex items-center pl-[69px]">
        <label htmlFor="cursor" className="w-[61px] shrink-0 text-[17px]">Cursor:</label>
        <input id="cursor" readOnly value="5 Hz (D-1) = -51 dB" className={readout} />
        <label htmlFor="peak" className="w-[45px] shrink-0 text-[17px]">Peak:</label>
        <input id="peak" readOnly value="4 Hz (C-2) = -50.4 dB" className={readout} />
        <label className="flex w-[171px] shrink-0 items-center gap-[5px] pl-[9px] text-[17px]">
          <span className="relative flex">
            <input type="checkbox" defaultChecked className="h-[20px] w-[20px] appearance-none border-2 border-[#444] bg-white" />
            <svg viewBox="0 0 20 20" className="pointer-events-none absolute inset-0 h-[20px] w-[20px]"><path d="M4 10 L8 15 L16 5" fill="none" stroke="#333" strokeWidth="1.8" /></svg>
          </span>
          Grids
        </label>
      </div>
      <div className="mt-[12px] grid grid-cols-[98px_265px_15px_46px_185px_17px_137px] items-center justify-center gap-y-[8px] pr-[3px]">
        <label htmlFor="algorithm">Algorithm:</label>
        <Pick id="algorithm" value="Spectrum" wrap="h-[40px]" className={pick} />
        <span />
        <label htmlFor="size" className="text-[17px]">Size:</label>
        <Pick id="size" value="65536" wrap="h-[40px]" className="pb-[3px] text-[17px]" />
        <span />
        <button type="button" className={button}>Export...</button>
        <label htmlFor="function">Function:</label>
        <Pick id="function" value="Gaussian(a=2.5) window" wrap="h-[40px]" className="pb-[3px] text-[17px]" />
        <span />
        <label htmlFor="axis" className="text-[17px]">Axis:</label>
        <Pick id="axis" value="Log frequency" wrap="h-[40px]" className={pick} />
        <span />
        <button type="button" className={button}>Replot...</button>
      </div>
      <div className="mt-[17px] flex items-center justify-end gap-[17px] pr-[19px]">
        <button type="button" className="h-[38px] w-[137px] border-[3px] border-[#1779d1] bg-[#e1e1e1]">Close</button>
        <button type="button" aria-label="Help" className="flex h-[42px] w-[42px] items-center justify-center border-2 border-[#adadad] bg-[#e1e1e1]">
          <span className="flex h-[34px] w-[34px] items-center justify-center rounded-full bg-[#699bfb] text-[26px] font-semibold leading-none text-white">?</span>
        </button>
      </div>
    </div>
  );
}

function Scribbles(): ReactElement {
  return (
    <svg className="pointer-events-none absolute inset-0 h-full w-full" fill="none" stroke="#050505" strokeWidth="2.4" strokeLinejoin="round" strokeLinecap="round">
      <path d="M1239 686 L1241 683 L1246 681 L1263 669 L1280 654 L1297 640 L1308 628 L1316 618 L1325 595 L1331 577 L1339 558 L1343 542 L1346 526 L1346 444 L1344 436 L1338 418 L1332 403 L1328 395 L1318 381 L1302 367 L1286 355 L1279 350 L1261 339 L1250 333 L1240 328 L1232 326 L1222 324 L1148 324 L1142 321 L1134 321 L1126 318 L1029 318 L1015 323 L1004 326 L991 332 L978 340 L965 348 L945 365 L937 376 L931 386 L920 408 L915 426 L913 438 L908 462 L908 536 L906 539 L906 592 L912 615 L918 629 L925 640 L934 655 L947 670 L958 677 L976 686 L978 692 L984 697 L1000 702 L1024 708 L1038 710 L1057 710 L1060 712 L1130 712 L1145 707 L1160 702 L1171 699 L1190 698 L1205 699 L1230 699 L1233 698" />
      <path d="M1381 494 L1382 493 L1391 493 L1399 500 L1413 516 L1428 532 L1438 544 L1444 552 L1453 564 L1459 574 L1462 584 L1466 592 L1470 601 L1473 601 L1479 588 L1487 575 L1498 553 L1507 541 L1519 522 L1536 499 L1545 490 L1563 467 L1575 459 L1598 438 L1612 429 L1621 426" />
    </svg>
  );
}

export default function App(): ReactElement {
  return (
    <div className={`relative flex h-screen min-h-[1152px] flex-col overflow-hidden bg-[#f2f2f2] pl-[2px] text-black ${SANS}`}>
      <TitleBar />
      <nav className="flex h-[32px] shrink-0 items-center gap-[21px] bg-white pl-[10px] text-[18px] text-[#6d6d6d]">
        {menu.map((item) => (
          <button key={item} type="button">{item}</button>
        ))}
      </nav>
      <Toolbars />
      <TrackArea />
      <BottomBar />
      <FrequencyDialog />
      <div className="absolute left-[122px] top-[596px] flex h-[32px] items-center border-2 border-[#767676] bg-white px-[9px] text-[18px] text-[#575757] shadow-[7px_6px_5px_rgba(0,0,0,0.4)]">
        Ctrl+Click to select or deselect track.
      </div>
      <Scribbles />
    </div>
  );
}
